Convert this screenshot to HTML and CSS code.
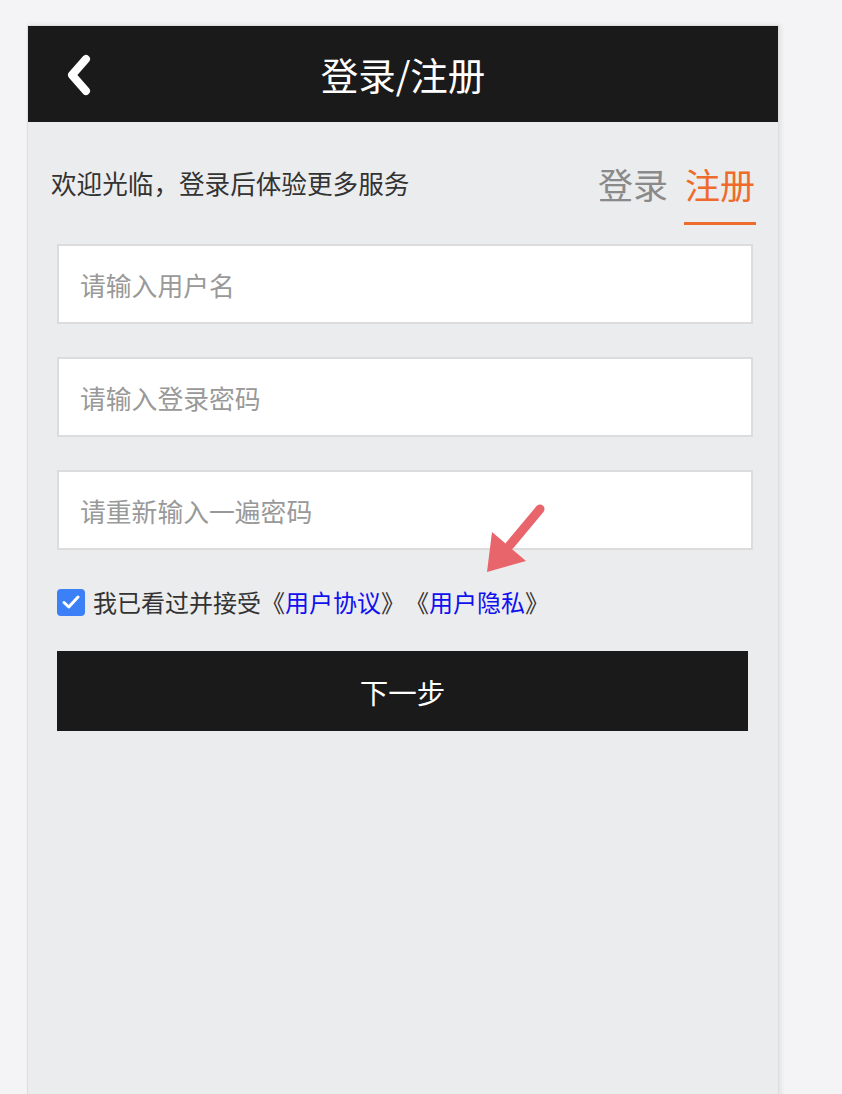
FILE: index.html
```html
<!DOCTYPE html>
<html lang="zh-CN">
<head>
<meta charset="utf-8">
<title>登录/注册</title>
<link rel="stylesheet" href="styles.css">
</head>
<body>
<div class="phone">
  <header class="header">
    <span class="back">
      <svg width="30" height="42" viewBox="0 0 30 42"><polyline points="21,5 7,21 21,37" fill="none" stroke="#fff" stroke-width="8" stroke-linecap="round" stroke-linejoin="round"/></svg>
    </span>
    <h1 class="title">登录/注册</h1>
  </header>
  <div class="intro">
    <p class="welcome">欢迎光临，登录后体验更多服务</p>
    <div class="tabs">
      <div class="tab">登录</div>
      <div class="tab active">注册</div>
    </div>
  </div>
  <form class="form">
    <input class="field" type="text" placeholder="请输入用户名">
    <input class="field" type="password" placeholder="请输入登录密码">
    <input class="field" type="password" placeholder="请重新输入一遍密码">
    <div class="agree">
      <span class="check">
        <svg width="18" height="14" viewBox="0 0 18 14"><polyline points="2,7.5 6.8,12 16,2" fill="none" stroke="#fff" stroke-width="3" stroke-linecap="round" stroke-linejoin="round"/></svg>
      </span>
      <span class="agree-text">我已看过并接受《<a class="link">用户协议</a>》《<a class="link">用户隐私</a>》</span>
    </div>
    <button class="submit" type="button">下一步</button>
  </form>
  <svg class="pointer" width="90" height="80" viewBox="0 0 90 80">
    <line x1="80" y1="9" x2="50" y2="45" stroke="#e8656b" stroke-width="9" stroke-linecap="round"/>
    <polygon points="27,72 32,32 66,61" fill="#e8656b"/>
  </svg>
</div>
</body>
</html>
```

FILE: styles.css
```css
* { box-sizing: border-box; }
html, body { margin: 0; padding: 0; }
body {
  background: #f4f4f6;
  padding: 25px 0 0 27px;
  font-family: "Noto Sans CJK SC", "Noto Sans", sans-serif;
  text-spacing-trim: space-all;
  overflow: hidden;
  height: 1094px;
}
.phone {
  position: relative;
  width: 752px;
  min-height: 1100px;
  background: #ebecee;
  border: 1px solid #dedede;
  box-shadow: 2px 0 5px rgba(0,0,0,0.08);
}
.header {
  height: 96px;
  background: #1a1a1a;
  display: flex;
  align-items: center;
  justify-content: center;
  position: relative;
}
.back {
  position: absolute;
  left: 37px;
  top: 28px;
  display: flex;
}
.title {
  margin: 0;
  color: #fff;
  font-size: 37.5px;
  font-weight: 400;
  line-height: 1;
}
.intro {
  display: flex;
  justify-content: space-between;
  align-items: flex-start;
  padding: 38px 22px 0 23px;
}
.welcome {
  margin: 0;
  font-size: 25.6px;
  line-height: 45px;
  color: #333;
}
.tabs {
  display: flex;
  gap: 15px;
}
.tab {
  font-size: 35px;
  line-height: 48px;
  color: #8a8a8a;
  padding: 0 1px 14px;
  border-bottom: 3px solid transparent;
}
.tab.active {
  color: #ee6b2c;
  border-bottom-color: #ee6b2c;
}
.form {
  display: flex;
  flex-direction: column;
  padding: 19px 25px 0 29px;
}
.field {
  height: 80px;
  border: 2px solid #dcdcdc;
  background: #fff;
  font-family: inherit;
  font-size: 25.8px;
  padding: 0 21px;
  margin: 0 0 33px;
  color: #333;
  outline: none;
}
.field::placeholder { color: #999; }
.agree {
  display: flex;
  align-items: center;
  gap: 8px;
  margin-top: 5px;
}
.check {
  width: 28px;
  height: 27px;
  border-radius: 4px;
  background: #3b80f6;
  display: flex;
  align-items: center;
  justify-content: center;
}
.agree-text {
  font-size: 24px;
  color: #333;
  line-height: 28px;
}
.link { color: #1010f0; }
.submit {
  margin-top: 35px;
  width: 691px;
  height: 80px;
  background: #1a1a1a;
  border: 0;
  color: #fff;
  font-family: inherit;
  font-size: 28.5px;
  cursor: pointer;
}
.pointer {
  position: absolute;
  left: 432px;
  top: 474px;
}
```
